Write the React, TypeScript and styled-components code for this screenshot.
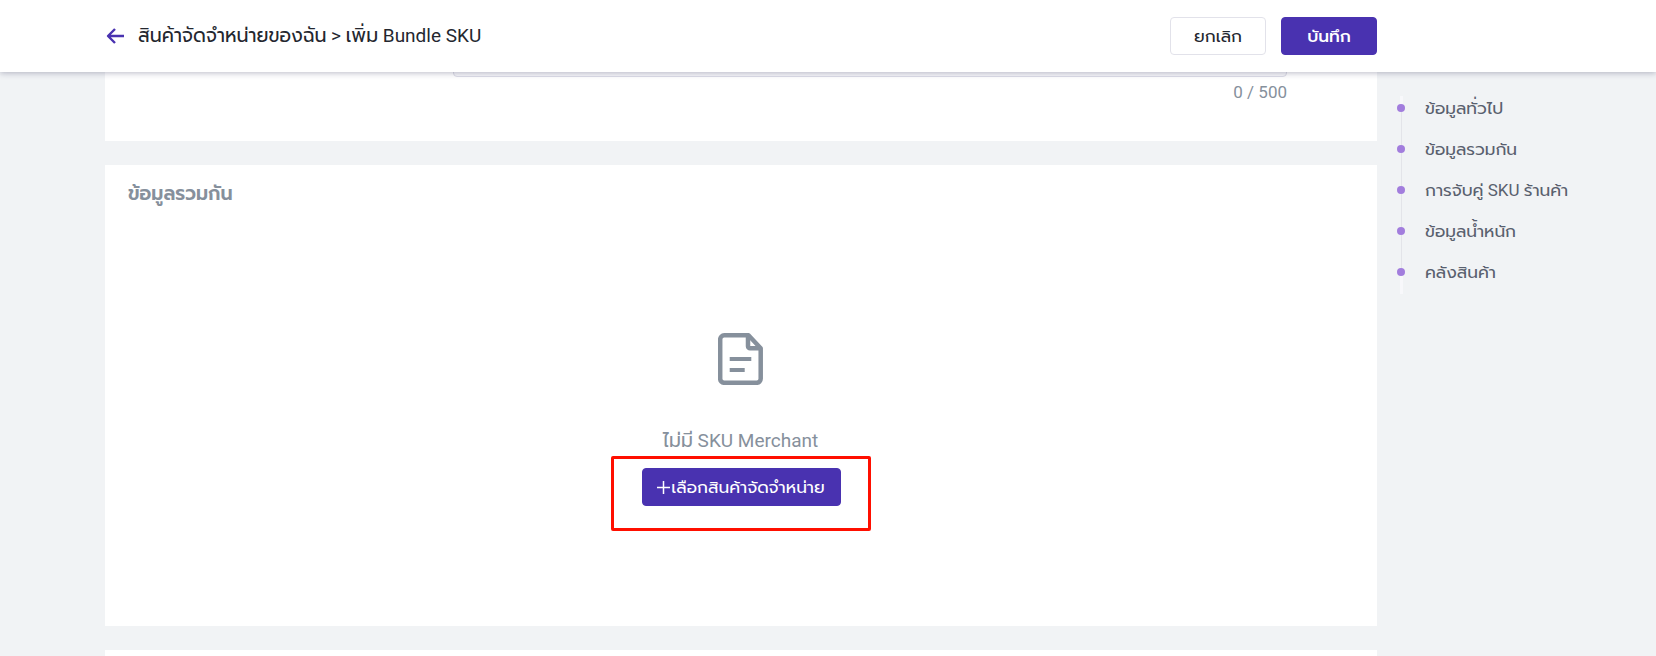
import React from "react";
import styled, { createGlobalStyle } from "styled-components";

const GlobalStyle = createGlobalStyle`
  *, *::before, *::after { box-sizing: border-box; }
  body {
    margin: 0;
    background: #f1f3f5;
    color: #24272f;
    font-family: Roboto, Prompt, "Noto Sans Thai", Kanit, sans-serif;
    font-size: 17px;
    line-height: 24px;
  }
`;

const Page = styled.div`
  display: flex;
  flex-direction: column;
  min-height: 100vh;
`;

const Header = styled.header`
  position: sticky;
  top: 0;
  z-index: 2;
  display: flex;
  align-items: center;
  justify-content: space-between;
  height: 72px;
  padding: 0 279px 0 105px;
  background: #fff;
  box-shadow: 0 1px 6px rgba(40, 40, 80, 0.32);
`;

const Heading = styled.div`
  display: flex;
  align-items: center;
  gap: 12px;
`;

const BackLink = styled.a`
  display: flex;
  color: #4932b0;
`;

const Crumb = styled.h1`
  margin: 0;
  font-size: 19px;
  font-weight: 400;
  line-height: 28px;
`;

const Actions = styled.div`
  display: flex;
  gap: 15px;
`;

const Button = styled.button<{ $primary?: boolean; $wide?: boolean }>`
  display: flex;
  align-items: center;
  justify-content: center;
  gap: 1px;
  min-width: ${(p) => (p.$wide ? 199 : 96)}px;
  height: 38px;
  padding: 0;
  border: 1px solid ${(p) => (p.$primary ? "#4932b0" : "#e2e2ea")};
  border-radius: 4px;
  background: ${(p) => (p.$primary ? "#4932b0" : "#fff")};
  color: ${(p) => (p.$primary ? "#fff" : "#24272f")};
  font: inherit;
  font-weight: ${(p) => (p.$primary && !p.$wide ? 500 : 400)};
  white-space: nowrap;
  cursor: pointer;
`;

const Body = styled.div`
  flex: 1;
  display: grid;
  grid-template-columns: minmax(0, 1fr) 279px;
  padding-left: 105px;
`;

const Main = styled.main`
  display: flex;
  flex-direction: column;
  gap: 24px;
  margin-top: -24px;
`;

const DescriptionCard = styled.section`
  padding: 0 90px 37px 348px;
  background: #fff;
`;

const DescriptionInput = styled.textarea`
  display: block;
  width: 100%;
  height: 29px;
  padding: 0 12px;
  border: 1px solid #dcdce6;
  border-radius: 4px;
  background: #f7f7fa;
  resize: none;
`;

const Counter = styled.div`
  padding-top: 3px;
  color: #86909c;
  text-align: right;
`;

const BundleCard = styled.section`
  height: 461px;
  padding: 17px 24px 16px 23px;
  background: #fff;
`;

const CardTitle = styled.h2`
  margin: 0;
  color: #86909c;
  font-size: 19px;
  font-weight: 600;
  line-height: 24px;
`;

const Empty = styled.div`
  display: flex;
  flex-direction: column;
  align-items: center;
  padding-top: 127px;
  color: #86909c;
`;

const EmptyText = styled.p`
  margin: 42px 0 1px;
  font-size: 19px;
  line-height: 28px;
`;

const Highlight = styled.div`
  padding: 9px 27px 22px 28px;
  border: 3px solid #ff0f00;
  border-radius: 2px;
`;

const NextCard = styled.section`
  flex: 1;
  background: #fff;
`;

const SideNav = styled.nav`
  padding: 24px 0 0 20px;
`;

const Steps = styled.ul`
  display: flex;
  flex-direction: column;
  gap: 17px;
  margin: 0;
  padding: 0 0 10px;
  list-style: none;
  background:
    linear-gradient(#f8f8fb, #f8f8fb) 3px 0 / 3px 12px no-repeat,
    linear-gradient(#f8f8fb, #f8f8fb) 3px 100% / 3px 20px no-repeat,
    linear-gradient(#e3e4e9, #e3e4e9) 4px 0 / 1px calc(100% - 20px) no-repeat;
`;

const StepLink = styled.a`
  display: flex;
  align-items: center;
  gap: 20px;
  color: #59606e;
  text-decoration: none;

  &::before {
    content: "";
    width: 8px;
    height: 8px;
    border-radius: 50%;
    background: #a27ddd;
  }
`;

const steps = [
  "ข้อมูลทั่วไป",
  "ข้อมูลรวมกัน",
  "การจับคู่ SKU ร้านค้า",
  "ข้อมูลน้ำหนัก",
  "คลังสินค้า",
];

const BackIcon = () => (
  <svg width="21" height="20" viewBox="0 0 21 20" fill="none" stroke="currentColor" strokeWidth="2.4" strokeLinejoin="round" aria-hidden="true">
    <path d="M19 10H3M10 3L3 10l7 7" />
  </svg>
);

const DocumentIcon = () => (
  <svg width="45" height="52" viewBox="0 0 45 52" fill="none" stroke="currentColor" strokeWidth="4.5" strokeLinejoin="round" aria-hidden="true">
    <path d="M30.500 2.300H6.200a4 4 0 0 0-4 4v39.500a4 4 0 0 0 4 4h32.500a4 4 0 0 0 4-4V15.200Z" />
    <path d="M30 2.500v10.700a2 2 0 0 0 2 2h10.500" />
    <path strokeWidth="4" d="M11.700 26h21.600M11.700 37h15" />
  </svg>
);

const PlusIcon = () => (
  <svg width="13" height="13" viewBox="0 0 13 13" fill="none" stroke="currentColor" strokeWidth="1.500" aria-hidden="true">
    <path d="M6.500 0v13M0 6.500h13" />
  </svg>
);

export default function App() {
  return (
    <Page>
      <GlobalStyle />
      <Header>
        <Heading>
          <BackLink href="#back" aria-label="ย้อนกลับ">
            <BackIcon />
          </BackLink>
          <Crumb>สินค้าจัดจำหน่ายของฉัน &gt; เพิ่ม Bundle SKU</Crumb>
        </Heading>
        <Actions>
          <Button type="button">ยกเลิก</Button>
          <Button type="submit" $primary>บันทึก</Button>
        </Actions>
      </Header>
      <Body>
        <Main>
          <DescriptionCard id="step-0">
            <DescriptionInput aria-label="คำอธิบาย" maxLength={500} />
            <Counter>0 / 500</Counter>
          </DescriptionCard>
          <BundleCard id="step-1">
            <CardTitle>ข้อมูลรวมกัน</CardTitle>
            <Empty>
              <DocumentIcon />
              <EmptyText>ไม่มี SKU Merchant</EmptyText>
              <Highlight>
                <Button type="button" $primary $wide>
                  <PlusIcon />
                  เลือกสินค้าจัดจำหน่าย
                </Button>
              </Highlight>
            </Empty>
          </BundleCard>
          <NextCard id="step-2" />
        </Main>
        <SideNav>
          <Steps>
            {steps.map((label, i) => (
              <li key={label}>
                <StepLink href={`#step-${i}`}>{label}</StepLink>
              </li>
            ))}
          </Steps>
        </SideNav>
      </Body>
    </Page>
  );
}
